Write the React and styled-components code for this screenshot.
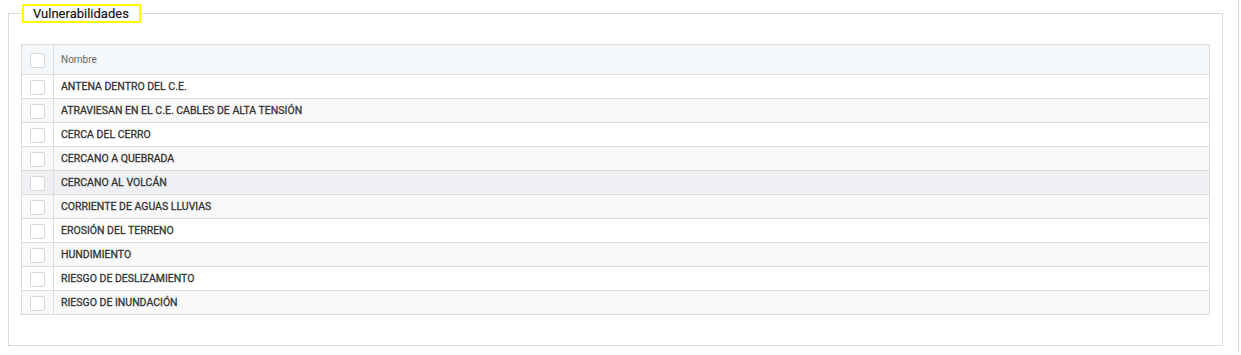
import React from "react";
import styled, { createGlobalStyle } from "styled-components";

const Global = createGlobalStyle`
  html, body { margin: 0; padding: 0; background: #fff; }
  body { font-family: Roboto, "Noto Sans", Arial, sans-serif; }
`;

const Page = styled.div`
  width: 1239px;
  height: 352px;
  border-right: 1px solid #d6d6d6;
  padding-top: 4px;
  box-sizing: border-box;
`;

const Fieldset = styled.fieldset`
  margin: 0 0 0 8px;
  width: 1215px;
  box-sizing: border-box;
  border: 1px solid #d9d9d9;
  padding: 21px 12px 30px 12px;
  min-width: 0;
`;

const Legend = styled.legend`
  margin-left: 1px;
  padding: 1px 10px 0 9px;
  border: 2px solid #ffff00;
  font-size: 13px;
  line-height: 14px;
  color: #111;
  height: 19px;
  box-sizing: border-box;
  -webkit-text-stroke: 0.15px #111;
`;

const Table = styled.table`
  width: 100%;
  border-collapse: collapse;
  border: 1px solid #dcdcdc;
`;

const HeadRow = styled.tr`
  background: #f4f8fb;
  height: 30px;
`;

const Row = styled.tr`
  height: 24px;
  background: ${(p) => (p.$hover ? "#eef0f3" : p.$alt ? "#f9f9f9" : "#fff")};
  border-top: 1px solid #dcdcdc;
`;

const CheckCell = styled.td`
  width: 31px;
  padding: 0;
  border-right: 1px solid #dcdcdc;
  text-align: center;
  vertical-align: middle;
`;

const HeadCheckCell = styled(CheckCell).attrs({ as: "th" })``;

const NameCell = styled.td`
  padding: 0 0 1px 7px;
  font-size: 10.5px;
  font-weight: 400;
  color: #333;
  -webkit-text-stroke: 0.3px #333;
  text-align: left;
  vertical-align: middle;
`;

const HeadCell = styled.th`
  padding: 0 0 0 7px;
  font-size: 10px;
  font-weight: 400;
  color: #666;
  text-align: left;
  vertical-align: middle;
`;

const Box = styled.span`
  display: inline-block;
  width: 13px;
  height: 13px;
  border: 1px solid #d8d8d8;
  border-radius: 2px;
  background: #fff;
  vertical-align: middle;
`;

const items = [
  "ANTENA DENTRO DEL C.E.",
  "ATRAVIESAN EN EL C.E. CABLES DE ALTA TENSIÓN",
  "CERCA DEL CERRO",
  "CERCANO A QUEBRADA",
  "CERCANO AL VOLCÁN",
  "CORRIENTE DE AGUAS LLUVIAS",
  "EROSIÓN DEL TERRENO",
  "HUNDIMIENTO",
  "RIESGO DE DESLIZAMIENTO",
  "RIESGO DE INUNDACIÓN",
];

export default function App() {
  return (
    <Page>
      <Global />
      <Fieldset>
        <Legend>Vulnerabilidades</Legend>
        <Table>
          <thead>
            <HeadRow>
              <HeadCheckCell>
                <Box />
              </HeadCheckCell>
              <HeadCell>Nombre</HeadCell>
            </HeadRow>
          </thead>
          <tbody>
            {items.map((t, i) => (
              <Row key={t} $alt={i % 2 === 1} $hover={i === 4}>
                <CheckCell>
                  <Box />
                </CheckCell>
                <NameCell>{t}</NameCell>
              </Row>
            ))}
          </tbody>
        </Table>
      </Fieldset>
    </Page>
  );
}
